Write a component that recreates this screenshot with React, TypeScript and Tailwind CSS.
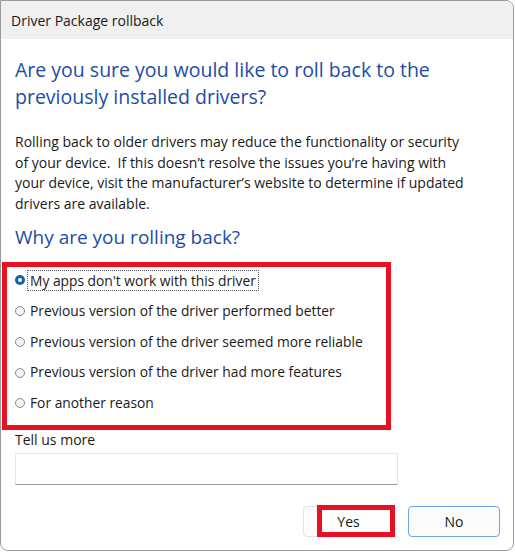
import React from 'react';

const font = { fontFamily: '"Segoe UI", "Open Sans", sans-serif' };

const reasons = [
    "My apps don't work with this driver",
    'Previous version of the driver performed better',
    'Previous version of the driver seemed more reliable',
    'Previous version of the driver had more features',
    'For another reason',
];

function Radio({ checked }: { checked: boolean }) {
    if (checked) {
        return (
            <span className="w-[10px] h-[10px] rounded-full bg-[#1a5fb4] flex items-center justify-center shrink-0">
                <span className="w-[4px] h-[4px] rounded-full bg-white" />
            </span>
        );
    }
    return <span className="w-[10px] h-[10px] rounded-full border border-[#8a8a8a] bg-[#f4f4f4] shrink-0" />;
}

export default function App() {
    return (
        <div className="w-[515px] h-[552px] bg-white" style={font}>
            <div className="w-[514px] h-[551px] border border-[#9a9a9a] rounded-tr-[8px] rounded-b-[8px] overflow-hidden flex flex-col bg-white">
                {/* Title bar */}
                <div className="h-[38px] bg-[#f0f0f0] flex items-center pl-[10px] text-[14px] text-[#1a1a1a] shrink-0">
                    Driver Package rollback
                </div>

                {/* Body */}
                <div className="flex-1 flex flex-col">
                    <h1 className="pl-[14px] pt-[17px] text-[19.5px] leading-[27px] text-[#1c4ca8] whitespace-nowrap">
                        Are you sure you would like to roll back to the
                        <br />
                        previously installed drivers?
                    </h1>

                    <p className="pl-[14px] pt-[22px] text-[14px] leading-[20.6px] text-[#1a1a1a] whitespace-nowrap">
                        Rolling back to older drivers may reduce the functionality or security
                        <br />
                        of your device.&nbsp; If this doesn’t resolve the issues you’re having with
                        <br />
                        your device, visit the manufacturer’s website to determine if updated
                        <br />
                        drivers are available.
                    </p>

                    <h2 className="pl-[14px] pt-[10px] text-[19px] leading-[26px] text-[#1c4ca8]">
                        Why are you rolling back?
                    </h2>

                    {/* Reasons */}
                    <div className="ml-[1px] mt-[12px] w-[389px] h-[168px] border-[5px] border-[#e81123] pl-[8px]">
                        <div className="-mt-[2.4px]">
                            {reasons.map((r, i) => (
                                <div key={r} className="h-[30.75px] flex items-center gap-[2px] text-[13.8px] text-[#1a1a1a]">
                                    <Radio checked={i === 0} />
                                    <span
                                        className={
                                            i === 0
                                                ? 'border border-dotted border-[#555] px-[2px] leading-[19px] whitespace-nowrap'
                                                : 'px-[3px] whitespace-nowrap'
                                        }
                                    >
                                        {r}
                                    </span>
                                </div>
                            ))}
                        </div>
                    </div>

                    <label className="pl-[14px] pt-[0px] text-[14px] leading-[20px] text-[#1a1a1a]">Tell us more</label>
                    <div className="ml-[14px] mt-[3px] w-[383px] h-[32px] border border-[#e6e6e6] border-b-[#9e9e9e] bg-white" />

                    {/* Buttons */}
                    <div className="mt-auto mb-[13px] mr-[13px] flex justify-end gap-[14px]">
                        <div className="relative">
                            <button className="w-[91px] h-[31px] rounded-[4px] border border-[#e3e3e3] bg-[#fdfdfd] text-[14px] text-[#1a1a1a]">
                                Yes
                            </button>
                            <span className="absolute left-[14px] -right-[1px] -top-[1px] bottom-0 border-[5px] border-[#e81123]" />
                        </div>
                        <button className="w-[92px] h-[31px] rounded-[4px] border border-[#6fa8dc] bg-[#fbfbfb] text-[14px] text-[#1a1a1a]">
                            No
                        </button>
                    </div>
                </div>
            </div>
        </div>
    );
}
